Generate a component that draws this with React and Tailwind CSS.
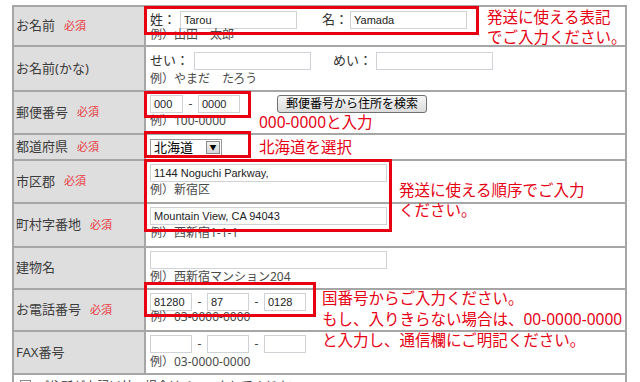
import React from 'react';

const jp = { fontFamily: '"Noto Sans", "Noto Sans CJK JP", sans-serif' };
const latin = { fontFamily: '"Liberation Sans", "Noto Sans CJK JP", sans-serif' };

function Req() {
  return <span className="ml-[9px] text-[11px] text-[#e8383d]">必須</span>;
}

function Label({ children, req, h }) {
  return (
    <div className={`bg-[#dedede] flex items-center pl-[2px] text-[13px] text-[#3c3c3c] ${h}`}>
      <span>{children}</span>
      {req && <Req />}
    </div>
  );
}

function Field({ w, value = '', className = '' }) {
  return (
    <div
      className={`h-[18px] border border-[#cfd3d8] bg-white flex items-center px-[3px] text-[11px] text-[#222] ${w} ${className}`}
      style={latin}
    >
      {value}
    </div>
  );
}

function Sample({ children, className = '' }) {
  return <p className={`text-[12px] leading-[16px] text-[#4a4a4a] ${className}`}>{children}</p>;
}

function Dash() {
  return <span className="w-[15px] text-center text-[12px] text-[#444]">-</span>;
}

function Cell({ children, h }) {
  return <div className={`bg-white pl-[4px] pt-[3px] ${h}`}>{children}</div>;
}

function RedBox({ className }) {
  return <div className={`absolute border-[3px] border-[#e60012] ${className}`} />;
}

function Note({ className, children }) {
  return (
    <div className={`absolute text-[15.5px] leading-[20px] text-[#e60012] whitespace-nowrap ${className}`}>
      {children}
    </div>
  );
}

export default function App() {
  return (
    <div className="relative w-[640px] h-[382px] overflow-hidden bg-white" style={jp}>
      <div className="ml-[12px] mt-[5px] w-[615px] grid grid-cols-[130px_479px] gap-[2px] p-[2px] bg-[#a6a6a6]">
        <Label req h="h-[38px]">お名前</Label>
        <Cell h="h-[38px]">
          <div className="flex items-center text-[13px] text-[#333]">
            <span className="w-[30px]">姓：</span>
            <Field w="w-[117px]" value="Tarou" />
            <span className="ml-[25px] w-[28px]">名：</span>
            <Field w="w-[117px]" value="Yamada" />
          </div>
          <Sample className="mt-[-3px]">例）山田　太郎</Sample>
        </Cell>

        <Label h="h-[43px]">お名前(かな)</Label>
        <Cell h="h-[43px]">
          <div className="flex items-center text-[13px] text-[#333] mt-[1px]">
            <span className="w-[44px]">せい：</span>
            <Field w="w-[117px]" />
            <span className="ml-[22px] w-[43px]">めい：</span>
            <Field w="w-[117px]" />
          </div>
          <Sample className="mt-[0px]">例）やまだ　たろう</Sample>
        </Cell>

        <Label req h="h-[41px]">郵便番号</Label>
        <Cell h="h-[41px]">
          <div className="flex items-center">
            <Field w="w-[33px]" value="000" />
            <span className="w-[15px] text-center text-[12px] text-[#444]">-</span>
            <Field w="w-[42px]" value="0000" />
            <button
              type="button"
              className="ml-[37px] h-[18px] w-[150px] rounded-[3px] border border-[#707070] bg-gradient-to-b from-[#f6f6f6] to-[#dcdcdc] text-[12px] leading-[16px] text-black"
            >
              郵便番号から住所を検索
            </button>
          </div>
          <Sample className="mt-[0px]">例）100-0000</Sample>
        </Cell>

        <Label req h="h-[24px]">都道府県</Label>
        <Cell h="h-[24px]">
          <div className="mt-[1px] h-[17px] w-[72px] border border-[#9a9a9a] bg-white flex items-center justify-between pl-[3px] pr-[1px] text-[13px] text-black">
            <span className="leading-[15px]">北海道</span>
            <span className="h-[13px] w-[14px] border border-[#8a8a8a] bg-gradient-to-b from-[#f2f2f2] to-[#d6d6d6] flex items-center justify-center text-[7px] leading-none">▼</span>
          </div>
        </Cell>

        <Label req h="h-[41px]">市区郡</Label>
        <Cell h="h-[41px]">
          <Field w="w-[237px]" value="1144 Noguchi Parkway," />
          <Sample className="mt-[0px]">例）新宿区</Sample>
        </Cell>

        <Label req h="h-[42px]">町村字番地</Label>
        <Cell h="h-[42px]">
          <Field w="w-[237px]" value="Mountain View, CA 94043" />
          <Sample className="mt-[0px]">例）西新宿1-1-1</Sample>
        </Cell>

        <Label h="h-[40px]">建物名</Label>
        <Cell h="h-[40px]">
          <Field w="w-[237px]" />
          <Sample className="mt-[0px]">例）西新宿マンション204</Sample>
        </Cell>

        <Label req h="h-[40px]">お電話番号</Label>
        <Cell h="h-[40px]">
          <div className="flex items-center">
            <Field w="w-[42px]" value="81280" />
            <Dash />
            <Field w="w-[42px]" value="87" />
            <Dash />
            <Field w="w-[42px]" value="0128" />
          </div>
          <Sample className="mt-[-2px]">例）03-0000-0000</Sample>
        </Cell>

        <Label h="h-[41px]">FAX番号</Label>
        <Cell h="h-[41px]">
          <div className="flex items-center">
            <Field w="w-[42px]" />
            <Dash />
            <Field w="w-[42px]" />
            <Dash />
            <Field w="w-[42px]" />
          </div>
          <Sample className="mt-[1px]">例）03-0000-0000</Sample>
        </Cell>

        <div className="col-span-2 bg-white h-[30px] flex items-start pl-[6px] pt-[3px] text-[12px] text-[#333]">
          <span className="mt-[2px] h-[11px] w-[11px] border border-[#8a8a8a] bg-white" />
          <span className="ml-[6px]">ご住所が上記以外の場合はチェックしてください</span>
        </div>
      </div>

      <RedBox className="left-[144px] top-[6px] w-[335px] h-[29px]" />
      <RedBox className="left-[144px] top-[91px] w-[107px] h-[27px]" />
      <RedBox className="left-[144px] top-[131px] w-[107px] h-[27px]" />
      <RedBox className="left-[144px] top-[159px] w-[248px] h-[73px]" />
      <RedBox className="left-[144px] top-[282px] w-[172px] h-[35px]" />

      <Note className="left-[487px] top-[7px]">
        発送に使える表記
        <br />
        でご入力ください。
      </Note>
      <Note className="left-[259px] top-[112px]">000-0000と入力</Note>
      <Note className="left-[259px] top-[137px]">北海道を選択</Note>
      <Note className="left-[399px] top-[180px]">
        発送に使える順序でご入力
        <br />
        ください。
      </Note>
      <Note className="left-[322px] top-[288px] leading-[21px]">
        国番号からご入力ください。
        <br />
        もし、入りきらない場合は、00-0000-0000
        <br />
        と入力し、通信欄にご明記ください。
      </Note>
    </div>
  );
}
